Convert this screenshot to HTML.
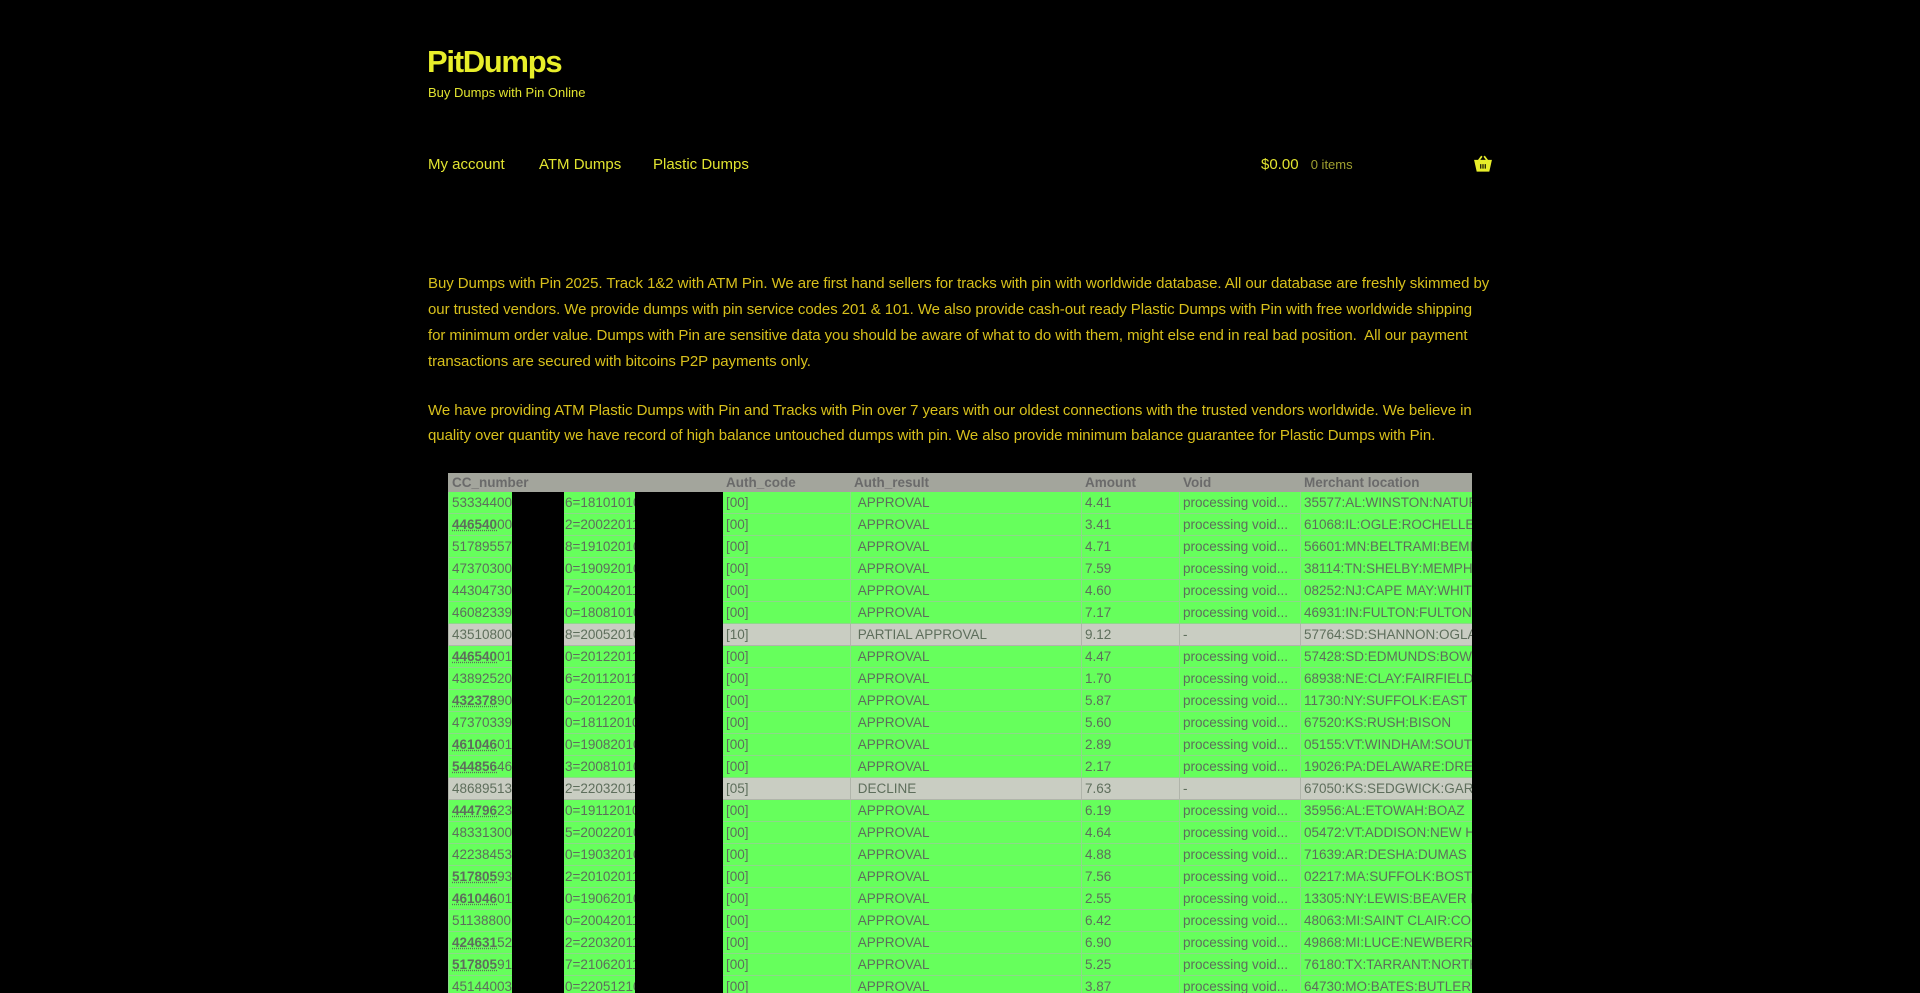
<!DOCTYPE html>
<html><head><meta charset="utf-8"><style>
html,body{margin:0;padding:0;background:#000;width:1920px;height:993px;overflow:hidden}
body{font-family:"Liberation Sans",sans-serif;color:#d8c01c}
.t{position:absolute;left:427px;top:42px;font-size:31px;font-weight:bold;color:#e8ee2a;letter-spacing:-1.3px;line-height:40px}
.tag{position:absolute;left:428px;top:85px;font-size:13px;color:#e2e430;line-height:16px}
.nav{position:absolute;top:156px;font-size:15px;color:#e2e430;line-height:18px}
.p{position:absolute;left:428px;font-size:15px;line-height:26px;color:#d8c01c;white-space:nowrap;letter-spacing:-0.06px}
.tb{position:absolute;left:448px;top:473px;width:1024px;height:520px;overflow:hidden;background:#66ff5c}
table{width:1024px;border-collapse:collapse;table-layout:fixed;font-family:"Liberation Sans",sans-serif;font-size:13.5px;color:#5e6e5c}
td,th{box-sizing:border-box;height:22px;padding:0 0 0 3px;border:1px solid #8ed88a;white-space:nowrap;overflow:hidden;text-align:left;line-height:20px}
th{background:#a3a59c;color:#6a6a6a;font-weight:bold;height:18px;line-height:17px;border-color:#a3a59c}
tr.g td{background:#c9cdc2;border-color:#b0b4aa}
td b{font-weight:bold;text-decoration:underline dotted}
td.c{position:relative}
td.c i{position:absolute;left:116px;top:0;bottom:0;line-height:21px;font-style:normal}
.k{position:absolute;background:#000;top:19px;height:510px}
</style></head><body>
<div class="t">PitDumps</div>
<div class="tag">Buy Dumps with Pin Online</div>
<div class="nav" style="left:428px">My account</div>
<div class="nav" style="left:539px">ATM Dumps</div>
<div class="nav" style="left:653px">Plastic Dumps</div>
<div class="nav" style="left:1261px">$0.00 <span style="font-size:13px;color:#a0a030;margin-left:8px">0 items</span></div>
<svg style="position:absolute;left:1474px;top:155px" width="18" height="17" viewBox="0 0 16 15"><path d="M1 5h14l-2 9H3z M4 5l3-4M12 5l-3-4" fill="#e8ee2a" stroke="#e8ee2a" stroke-width="1.5"/><path d="M6 8v4M8 8v4M10 8v4" stroke="#000" stroke-width="1"/></svg>
<div class="p" style="top:271px">Buy Dumps with Pin 2025. Track 1&amp;2 with ATM Pin. We are first hand sellers for tracks with pin with worldwide database. All our database are freshly skimmed by<br>our trusted vendors. We provide dumps with pin service codes 201 &amp; 101. We also provide cash-out ready Plastic Dumps with Pin with free worldwide shipping<br>for minimum order value. Dumps with Pin are sensitive data you should be aware of what to do with them, might else end in real bad position.&nbsp; All our payment<br>transactions are secured with bitcoins P2P payments only.</div>
<div class="p" style="top:398px;line-height:25px">We have providing ATM Plastic Dumps with Pin and Tracks with Pin over 7 years with our oldest connections with the trusted vendors worldwide. We believe in<br>quality over quantity we have record of high balance untouched dumps with pin. We also provide minimum balance guarantee for Plastic Dumps with Pin.</div>
<div class="tb">
<table>
<colgroup><col style="width:274px"><col style="width:128px"><col style="width:231px"><col style="width:98px"><col style="width:121px"><col style="width:172px"></colgroup>
<tr><th>CC_number</th><th>Auth_code</th><th>Auth_result</th><th>Amount</th><th>Void</th><th>Merchant location</th></tr>
<tr><td class="c">533344000<i>6=18101010</i></td><td>[00]</td><td>&nbsp;APPROVAL</td><td>4.41</td><td>processing void...</td><td>35577:AL:WINSTON:NATURAL</td></tr>
<tr><td class="c"><b>446540</b>007<i>2=20022011</i></td><td>[00]</td><td>&nbsp;APPROVAL</td><td>3.41</td><td>processing void...</td><td>61068:IL:OGLE:ROCHELLE</td></tr>
<tr><td class="c">517895571<i>8=19102010</i></td><td>[00]</td><td>&nbsp;APPROVAL</td><td>4.71</td><td>processing void...</td><td>56601:MN:BELTRAMI:BEMIDJI</td></tr>
<tr><td class="c">473703000<i>0=19092010</i></td><td>[00]</td><td>&nbsp;APPROVAL</td><td>7.59</td><td>processing void...</td><td>38114:TN:SHELBY:MEMPHIS</td></tr>
<tr><td class="c">443047305<i>7=20042011</i></td><td>[00]</td><td>&nbsp;APPROVAL</td><td>4.60</td><td>processing void...</td><td>08252:NJ:CAPE MAY:WHITE</td></tr>
<tr><td class="c">460823393<i>0=18081010</i></td><td>[00]</td><td>&nbsp;APPROVAL</td><td>7.17</td><td>processing void...</td><td>46931:IN:FULTON:FULTON</td></tr>
<tr class="g"><td class="c">435108000<i>8=20052010</i></td><td>[10]</td><td>&nbsp;PARTIAL APPROVAL</td><td>9.12</td><td>-</td><td>57764:SD:SHANNON:OGLALA</td></tr>
<tr><td class="c"><b>446540</b>016<i>0=20122011</i></td><td>[00]</td><td>&nbsp;APPROVAL</td><td>4.47</td><td>processing void...</td><td>57428:SD:EDMUNDS:BOWDLE</td></tr>
<tr><td class="c">438925209<i>6=20112011</i></td><td>[00]</td><td>&nbsp;APPROVAL</td><td>1.70</td><td>processing void...</td><td>68938:NE:CLAY:FAIRFIELD</td></tr>
<tr><td class="c"><b>432378</b>907<i>0=20122010</i></td><td>[00]</td><td>&nbsp;APPROVAL</td><td>5.87</td><td>processing void...</td><td>11730:NY:SUFFOLK:EAST ISLIP</td></tr>
<tr><td class="c">473703398<i>0=18112010</i></td><td>[00]</td><td>&nbsp;APPROVAL</td><td>5.60</td><td>processing void...</td><td>67520:KS:RUSH:BISON</td></tr>
<tr><td class="c"><b>461046</b>012<i>0=19082010</i></td><td>[00]</td><td>&nbsp;APPROVAL</td><td>2.89</td><td>processing void...</td><td>05155:VT:WINDHAM:SOUTH</td></tr>
<tr><td class="c"><b>544856</b>460<i>3=20081010</i></td><td>[00]</td><td>&nbsp;APPROVAL</td><td>2.17</td><td>processing void...</td><td>19026:PA:DELAWARE:DREXEL</td></tr>
<tr class="g"><td class="c">486895131<i>2=22032011</i></td><td>[05]</td><td>&nbsp;DECLINE</td><td>7.63</td><td>-</td><td>67050:KS:SEDGWICK:GARDEN</td></tr>
<tr><td class="c"><b>444796</b>233<i>0=19112010</i></td><td>[00]</td><td>&nbsp;APPROVAL</td><td>6.19</td><td>processing void...</td><td>35956:AL:ETOWAH:BOAZ</td></tr>
<tr><td class="c">483313003<i>5=20022010</i></td><td>[00]</td><td>&nbsp;APPROVAL</td><td>4.64</td><td>processing void...</td><td>05472:VT:ADDISON:NEW HAVEN</td></tr>
<tr><td class="c">422384530<i>0=19032010</i></td><td>[00]</td><td>&nbsp;APPROVAL</td><td>4.88</td><td>processing void...</td><td>71639:AR:DESHA:DUMAS</td></tr>
<tr><td class="c"><b>517805</b>936<i>2=20102011</i></td><td>[00]</td><td>&nbsp;APPROVAL</td><td>7.56</td><td>processing void...</td><td>02217:MA:SUFFOLK:BOSTON</td></tr>
<tr><td class="c"><b>461046</b>012<i>0=19062010</i></td><td>[00]</td><td>&nbsp;APPROVAL</td><td>2.55</td><td>processing void...</td><td>13305:NY:LEWIS:BEAVER FALLS</td></tr>
<tr><td class="c">511388001<i>0=20042011</i></td><td>[00]</td><td>&nbsp;APPROVAL</td><td>6.42</td><td>processing void...</td><td>48063:MI:SAINT CLAIR:COLUMBUS</td></tr>
<tr><td class="c"><b>424631</b>522<i>2=22032011</i></td><td>[00]</td><td>&nbsp;APPROVAL</td><td>6.90</td><td>processing void...</td><td>49868:MI:LUCE:NEWBERRY</td></tr>
<tr><td class="c"><b>517805</b>917<i>7=21062011</i></td><td>[00]</td><td>&nbsp;APPROVAL</td><td>5.25</td><td>processing void...</td><td>76180:TX:TARRANT:NORTH</td></tr>
<tr><td class="c">451440030<i>0=22051210</i></td><td>[00]</td><td>&nbsp;APPROVAL</td><td>3.87</td><td>processing void...</td><td>64730:MO:BATES:BUTLER</td></tr>
</table>
<div class="k" style="left:64px;width:52px"></div>
<div class="k" style="left:187px;width:88px"></div>
</div>
</body></html>
